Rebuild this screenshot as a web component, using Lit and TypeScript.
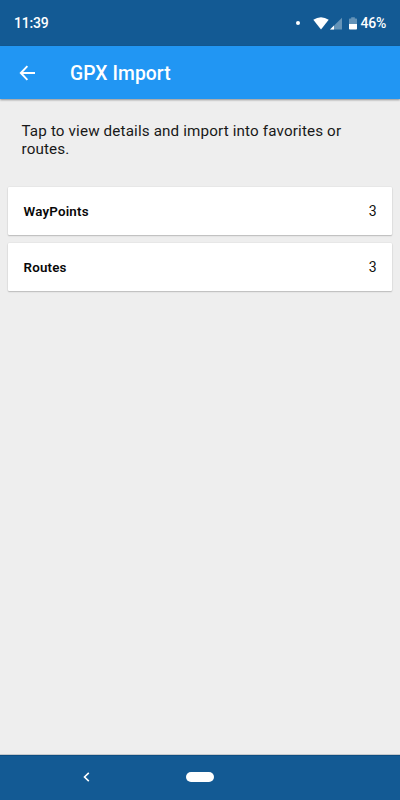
import { LitElement, html, css } from "lit";
import { customElement, property } from "lit/decorators.js";

@customElement("status-bar")
class StatusBar extends LitElement {
  static styles = css`
    :host { display: flex; flex: none; height: 46px; align-items: center; background: #135a94; color: #fff; padding: 0 14px; font-size: 14px; letter-spacing: -0.2px; font-weight: 500; }
    .time { flex: 1; }
    svg { display: block; flex: none; }
    .dot { width: 4px; height: 4px; border-radius: 50%; background: #fff; margin-right: 12.5px; }
    .battery { margin: 0 3.5px 0 6px; }
  `;
  render() {
    return html`
      <span class="time">11:39</span>
      <span class="dot"></span>
      <svg width="16" height="13" viewBox="0 0 16 13"><path d="M.3 2.8Q8-2.3 15.7 2.8L8 12.4Z" fill="#fff"/></svg>
      <svg width="14" height="13" viewBox="0 0 14 13"><path d="M1 12.4L13 .7V12.4Z" fill="#6493b8"/><path d="M1 12.4L5 8.5V12.4Z" fill="#fff"/></svg>
      <svg class="battery" width="8" height="13" viewBox="0 0 8 13"><path d="M0 2Q0 1.4.8 1.4H2.2V.3H5.8V1.4H7.2Q8 1.4 8 2V7H0Z" fill="#6493b8"/><path d="M0 7H8V11.8Q8 12.5 7.2 12.5H.8Q0 12.5 0 11.8Z" fill="#fff"/></svg>
      <span>46%</span>`;
  }
}

@customElement("count-row")
class CountRow extends LitElement {
  @property() label = "";
  @property({ type: Number }) count = 0;
  static styles = css`
    :host { display: flex; box-sizing: border-box; height: 48px; align-items: center; justify-content: space-between; padding: 0 15.5px; background: #fff; border-radius: 1px; box-shadow: 0 1px 1.5px rgba(0,0,0,.2), 0 0 1.5px rgba(0,0,0,.12); font-size: 13.33px; color: #111; }
    .label { font-weight: 600; letter-spacing: 0.2px; color: #080808; }
    .count { font-size: 14px; font-weight: 400; }
  `;
  render() {
    return html`<span class="label">${this.label}</span><span class="count">${this.count}</span>`;
  }
}

@customElement("app-root")
class AppRoot extends LitElement {
  static styles = css`
    :host { display: flex; flex-direction: column; height: 800px; width: 400px; overflow: hidden; background: #eee; font-family: Roboto, sans-serif; }
    header { flex: none; height: 53px; display: flex; align-items: center; background: #2196f3; color: #fff; padding-left: 19px; box-shadow: 0 1px 2px rgba(0,0,0,.4); }
    h1 { margin: 2px 0 0 34px; font-size: 19.3px; letter-spacing: 0.1px; line-height: 24px; font-weight: 500; }
    main { flex: 1; }
    .intro { margin: 0; padding: 23px 22px 29px 21.5px; font-size: 15.2px; letter-spacing: 0.15px; line-height: 18px; color: #181818; }
    .rows { display: flex; flex-direction: column; gap: 8px; padding: 0 8px; }
    footer { flex: none; box-sizing: border-box; height: 45px; display: flex; align-items: center; border-top: 1px solid #0c4d82; background: #135a94; box-shadow: 0 -1px 0 #c4c8cc; padding: 0 0 2px 83px; }
    .home { width: 28px; height: 10px; border-radius: 5px; background: #fff; margin-left: 96px; }
    svg { display: block; }
  `;
  render() {
    return html`
      <status-bar></status-bar>
      <header>
        <svg width="17" height="16" viewBox="0 0 17 16" fill="none" stroke="#fff" stroke-width="1.9"><path d="M16 8H2M8.4 1.2L1.8 8L8.4 14.8"/></svg>
        <h1>GPX Import</h1>
      </header>
      <main>
        <p class="intro">Tap to view details and import into favorites or routes.</p>
        <div class="rows">
          <count-row label="WayPoints" count="3"></count-row>
          <count-row label="Routes" count="3"></count-row>
        </div>
      </main>
      <footer>
        <svg width="7" height="10" viewBox="0 0 7 10" fill="none" stroke="#fff" stroke-width="1.6"><path d="M5.8.9L1.5 5L5.8 9.1"/></svg>
        <span class="home"></span>
      </footer>`;
  }
}
